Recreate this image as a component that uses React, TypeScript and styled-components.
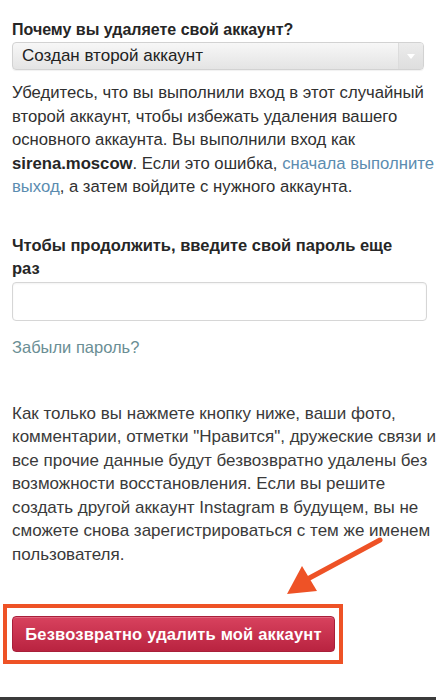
import React from 'react';
import styled, { createGlobalStyle } from 'styled-components';

const GlobalStyle = createGlobalStyle`
  html, body {
    margin: 0;
    padding: 0;
    background: #ffffff;
    overflow: hidden;
  }

  body {
    font-family: "Liberation Sans", Arial, sans-serif;
    color: #262626;
  }
`;

const Page = styled.div`
  position: relative;
  width: 436px;
  height: 700px;
  overflow: hidden;
  box-sizing: border-box;
  padding: 18px 12px 0 12px;
  display: flex;
  flex-direction: column;
`;

const Heading = styled.h2<{ $top?: number; $size?: number }>`
  margin: ${(p) => p.$top ?? 0}px 0 0 0;
  font-size: ${(p) => p.$size ?? 16}px;
  font-weight: bold;
  line-height: 23px;
  color: #262626;
  white-space: nowrap;
`;

const Select = styled.div`
  margin-top: 1px;
  height: 28px;
  box-sizing: border-box;
  border: 1px solid #d2d2d2;
  border-radius: 4px;
  background: linear-gradient(to bottom, #f7f7f7, #e4e4e4);
  display: flex;
  align-items: center;
  font-size: 17px;
  color: #222;
  box-shadow: 0 1px 1px rgba(0, 0, 0, 0.06);
`;

const SelectValue = styled.span`
  flex: 1;
  padding-left: 9px;
`;

const SelectCaret = styled.span`
  width: 24px;
  height: 100%;
  border-left: 1px solid #dcdcdc;
  background: linear-gradient(to bottom, #ececec, #dedede);
  border-radius: 0 3px 3px 0;
  display: flex;
  align-items: center;
  justify-content: center;

  &::after {
    content: '';
    border-left: 4px solid transparent;
    border-right: 4px solid transparent;
    border-top: 5px solid #ffffff;
  }
`;

const Text = styled.p<{ $top: number; $size: number; $light?: boolean }>`
  margin: ${(p) => p.$top}px 0 0 0;
  font-size: ${(p) => p.$size}px;
  line-height: 23.5px;
  color: ${(p) => (p.$light ? '#3a3a3a' : '#303030')};
  white-space: nowrap;
`;

const Strong = styled.b`
  color: #262626;
`;

const Link = styled.a<{ $tone?: 'blue' | 'grey' }>`
  color: ${(p) => (p.$tone === 'grey' ? '#6a8e94' : '#5b8cb0')};
  text-decoration: none;
`;

const Forgot = styled.div`
  margin-top: 16px;
  font-size: 16.5px;
  line-height: 20px;
`;

const PasswordInput = styled.input`
  margin-top: 2px;
  height: 39px;
  width: 415px;
  box-sizing: border-box;
  border: 1px solid #d6d6d6;
  border-radius: 4px;
  background: #ffffff;
  box-shadow: inset 0 1px 2px rgba(0, 0, 0, 0.05);
  outline: none;
`;

const Highlight = styled.div`
  margin: 38px 0 0 -9px;
  width: 340px;
  box-sizing: border-box;
  border: 4px solid #ee5226;
  padding: 8px 4px 8px 5px;
`;

const DangerButton = styled.button`
  width: 100%;
  height: 36px;
  border: 1px solid #a81f3a;
  border-radius: 4px;
  background: linear-gradient(to bottom, #d8425e, #b92340);
  color: #ffffff;
  font-family: "Liberation Sans", Arial, sans-serif;
  font-size: 16.5px;
  font-weight: bold;
  letter-spacing: 0.2px;
  box-shadow: inset 0 1px 0 rgba(255, 255, 255, 0.2);
`;

const Pointer = styled.svg`
  position: absolute;
  left: 0;
  top: 0;
  pointer-events: none;
`;

const BottomEdge = styled.div`
  position: absolute;
  left: 0;
  right: 0;
  bottom: 0;
  height: 3px;
  background: #3b3b3b;
`;

const App: React.FC = () => {
  return (
    <Page>
      <GlobalStyle />
      <Heading>Почему вы удаляете свой аккаунт?</Heading>
      <Select>
        <SelectValue>Создан второй аккаунт</SelectValue>
        <SelectCaret />
      </Select>
      <Text $top={11} $size={16.7}>
        Убедитесь, что вы выполнили вход в этот случайный
        <br />
        второй аккаунт, чтобы избежать удаления вашего
        <br />
        основного аккаунта. Вы выполнили вход как
        <br />
        <Strong>sirena.moscow</Strong>. Если это ошибка, <Link href="#">сначала выполните</Link>
        <br />
        <Link href="#">выход</Link>, а затем войдите с нужного аккаунта.
      </Text>

      <Heading $top={35} $size={16.5}>
        Чтобы продолжить, введите свой пароль еще
        <br />
        раз
      </Heading>
      <PasswordInput type="password" />
      <Forgot>
        <Link href="#" $tone="grey">
          Забыли пароль?
        </Link>
      </Forgot>

      <Text $top={45} $size={17} $light>
        Как только вы нажмете кнопку ниже, ваши фото,
        <br />
        комментарии, отметки "Нравится", дружеские связи и
        <br />
        все прочие данные будут безвозвратно удалены без
        <br />
        возможности восстановления. Если вы решите
        <br />
        создать другой аккаунт Instagram в будущем, вы не
        <br />
        сможете снова зарегистрироваться с тем же именем
        <br />
        пользователя.
      </Text>

      <Highlight>
        <DangerButton>Безвозвратно удалить мой аккаунт</DangerButton>
      </Highlight>

      <Pointer width="436" height="700" viewBox="0 0 436 700">
        <line x1="380" y1="540" x2="302" y2="582" stroke="#ee5226" strokeWidth="5" strokeLinecap="round" />
        <polygon points="287,594 302,566 317,591" fill="#ee5226" />
      </Pointer>
      <BottomEdge />
    </Page>
  );
};

export default App;
